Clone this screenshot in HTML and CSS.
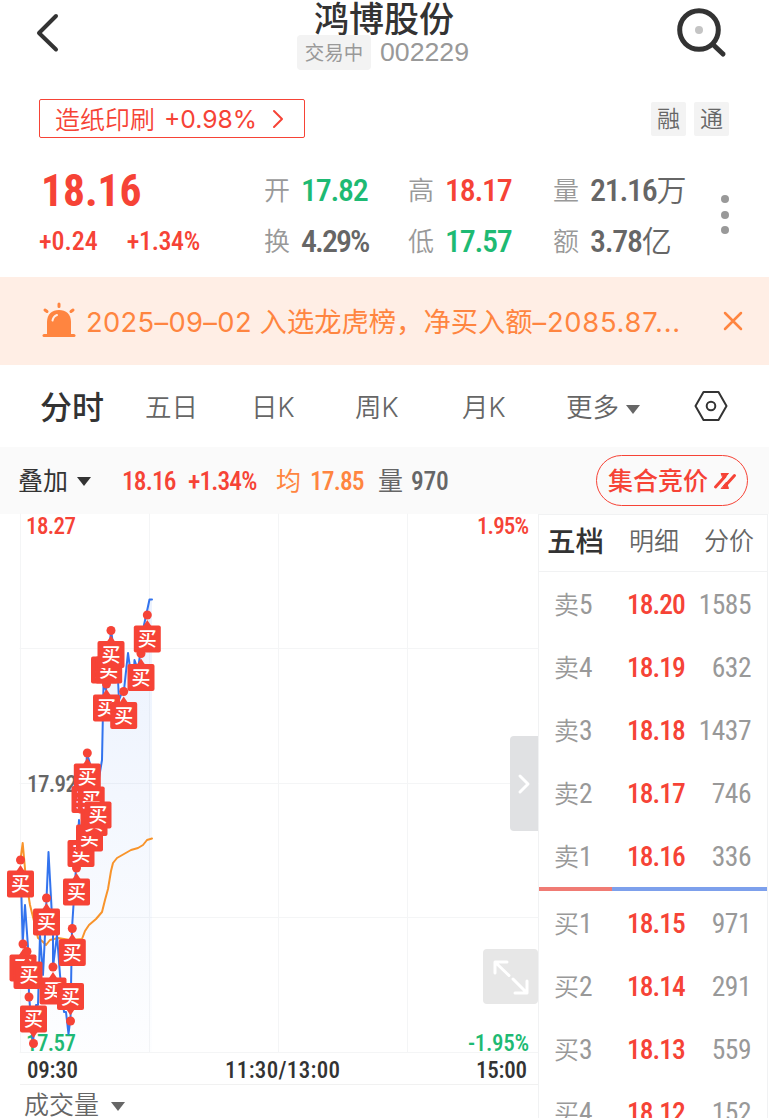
FILE: index.html
```html
<!DOCTYPE html>
<html lang="zh-CN">
<head>
    <meta charset="UTF-8">
    <meta name="viewport" content="width=device-width, initial-scale=1.0">
    <title>鸿博股份 002229</title>
    <link rel="stylesheet" href="styles.css">
</head>
<body>
    <header class="header">
        <svg class="back" width="24" height="40" viewBox="0 0 24 40"><path d="M20 3 L3 20 L20 36.500" /></svg>
        <div class="title">
            <h1>鸿博股份</h1>
            <div class="sub"><span class="status">交易中</span><span class="code">002229</span></div>
        </div>
        <svg class="search" width="52" height="52" viewBox="0 0 52 52">
            <circle cx="24" cy="24" r="19.300" /><path d="M38.500 39 L48 48" /><circle class="dot" cx="24" cy="24" r="4" />
        </svg>
    </header>

    <div class="sector-row">
        <a class="sector">造纸印刷 <span class="sector-pct">+0.98%</span>
            <svg width="12" height="20" viewBox="0 0 12 20"><path d="M2 2 L10 10 L2 18" /></svg>
        </a>
        <div class="tags"><span>融</span><span>通</span></div>
    </div>

    <section class="quote">
        <div class="price">
            <div class="num last">18.16</div>
            <div class="change"><span class="num">+0.24</span><span class="num">+1.34%</span></div>
        </div>
        <dl class="stats">
            <div><dt>开</dt><dd class="num green">17.82</dd></div>
            <div><dt>高</dt><dd class="num red">18.17</dd></div>
            <div><dt>量</dt><dd class="num">21.16<i>万</i></dd></div>
            <div><dt>换</dt><dd class="num turnover">4.29%</dd></div>
            <div><dt>低</dt><dd class="num green">17.57</dd></div>
            <div><dt>额</dt><dd class="num">3.78<i>亿</i></dd></div>
        </dl>
        <div class="dots"><b></b><b></b><b></b></div>
    </section>

    <div class="notice">
        <svg class="alarm" width="34" height="36" viewBox="0 0 34 36">
            <path class="lamp" d="M5 33 V20 C5 12 10 8 17 8 C24 8 29 12 29 20 V33 Z" />
            <path class="ray" d="M17 2 V4.500 M3 8 L5 9.500 M31 8 L29 9.500" />
            <path class="base" d="M2 33.500 H32" />
            <path class="shine" d="M10.500 18.500 C11 15.500 12.500 14 15 13" />
        </svg>
        <p><span class="date">2025–09–02</span> 入选龙虎榜，净买入额<span class="amount">–2085.87...</span></p>
        <svg class="close" width="20" height="20" viewBox="0 0 20 20"><path d="M2 2 L18 18 M18 2 L2 18" /></svg>
    </div>

    <nav class="tabs">
        <a class="active">分时</a>
        <a>五日</a>
        <a>日K</a>
        <a>周K</a>
        <a>月K</a>
        <a class="more">更多<i class="caret"></i></a>
        <svg width="34" height="32" viewBox="0 0 34 32">
            <path d="M9.500 2 H24.500 L32.500 16 L24.500 30 H9.500 L1.500 16 Z" /><circle cx="17" cy="16" r="4.300" />
        </svg>
    </nav>

    <div class="infobar">
        <span class="overlay">叠加<i class="caret"></i></span>
        <span class="num red now">18.16</span>
        <span class="num red pct">+1.34%</span>
        <span class="orange avg">均</span>
        <span class="num orange avg-num">17.85</span>
        <span class="vol">量</span>
        <span class="num vol-num">970</span>
        <a class="auction"><span>集合竞价</span>
            <svg width="22" height="18" viewBox="0 0 22 18">
                <path class="bar" d="M1.500 15 L11 4.500 M20.500 3.500 L11 14" />
                <path class="cap" d="M7.500 1.500 H14.500 L9.500 7 Z M7.500 16.500 H14.500 L12.500 10.500 Z" />
            </svg>
        </a>
    </div>

    <main class="main">
        <div class="left">
            <svg class="chart" width="538" height="570" viewBox="0 514 538 570">
                <defs>
                    <linearGradient id="area" x1="0" y1="0" x2="0" y2="1">
                        <stop offset="0" stop-color="#3b7cf0" stop-opacity=".1" />
                        <stop offset="1" stop-color="#3b7cf0" stop-opacity=".01" />
                    </linearGradient>
                    <g id="buy">
                        <rect x="-13.500" y="-13.500" width="27" height="27" rx="2" />
                        <text y="7.300">买</text>
                    </g>
                    <g id="up">
                        <circle cy="-24" r="4.500" /><path d="M-4 -13 L0 -19 L4 -13 Z" />
                        <use href="#buy" />
                    </g>
                    <g id="down">
                        <circle cy="24.500" r="4.500" /><path d="M-4 13 L0 19 L4 13 Z" />
                        <use href="#buy" />
                    </g>
                </defs>

                <path class="grid" d="M20.500 514 V1052 M149.500 514 V1052 M278.500 514 V1052 M407.500 514 V1052 M20 648.500 H538 M20 783.500 H538 M20 917.500 H538 M20 1052.500 H538" />

                <text class="label red" x="26" y="534" textLength="50">18.27</text>
                <text class="label red" x="477" y="534" textLength="52">1.95%</text>
                <text class="label gray" x="27" y="792" textLength="50">17.92</text>
                <text class="label green" x="26" y="1050.500" textLength="50">17.57</text>
                <text class="label green" x="468" y="1050.500" textLength="61">-1.95%</text>
                <text class="label time" x="27" y="1078" textLength="51">09:30</text>
                <text class="label time" x="225" y="1078" textLength="115">11:30/13:00</text>
                <text class="label time" x="476" y="1078" textLength="51">15:00</text>

                <path fill="url(#area)" d="M21 893 L25 905 L33 1010 L40 935 L48.500 852 L57 935 L68.500 1034 L72 928 L76 868 L79 820 L87 753 L97 790 L102 760 L103 690 L111 630 L119 700 L128 652 L133 690 L144 625 L149.500 599.500 H152 V1052 H21 Z" />
                <path class="avg-line" d="M20.700 858 L22.700 843 L26 880 L30 905 L35 925 L38 938 L42 941 L46 945 L50 940 L58 938 L70 940 L82 939 L85 931 L89 925 L96 919 L102 912 L105 900 L108 889 L111 871 L113 863 L117 858 L124 854 L131 850 L138 848 L143 845 L147 840 L152 838.500" />
                <path class="price-line" d="M20.700 870 L22.700 943 L25 905 L28 947 L29 995 L33 1043 L36 1005 L38 1005 L40 935 L43 975 L45 935 L48.500 852 L53 935 L53 967 L57 935 L60 975 L64 1012 L66 1012 L68.500 1034 L70.500 1018 L72 928 L73.500 905 L76 868 L79 820 L82 845 L87 753 L97 790 L102 760 L103.500 685 L106 690 L111 630 L118 680 L119 700 L121 695 L124 690 L128 653 L133 690 L134.500 660 L138 670 L144 625 L149.500 599.500 L152 599.500" />

                <g class="marks">
                    <use href="#up" x="20.500" y="884" />
                    <use href="#up" x="23" y="968" />
                    <use href="#up" x="27" y="975.500" />
                    <use href="#buy" x="29" y="975" />
                    <circle cx="29" cy="997" r="4.500" />
                    <use href="#down" x="33.500" y="1019" />
                    <use href="#up" x="46.500" y="922" />
                    <use href="#up" x="53" y="991" />
                    <use href="#down" x="70.500" y="996.500" />
                    <use href="#up" x="72.300" y="952.500" />
                    <use href="#up" x="76.500" y="892" />
                    <use href="#buy" x="81" y="853.500" />
                    <use href="#buy" x="89.500" y="838" />
                    <use href="#buy" x="94" y="822.500" />
                    <use href="#buy" x="85" y="799.500" />
                    <use href="#buy" x="91.200" y="800" />
                    <use href="#buy" x="98" y="815" />
                    <use href="#up" x="87.300" y="777" />
                    <use href="#up" x="106.500" y="708" />
                    <use href="#up" x="123.700" y="715.500" />
                    <use href="#buy" x="104.500" y="670" />
                    <use href="#buy" x="108.700" y="670" />
                    <use href="#up" x="111" y="654.500" />
                    <use href="#up" x="141" y="677.500" />
                    <use href="#up" x="147.300" y="639" />
                </g>
            </svg>
            <button class="collapse"><svg width="12" height="20" viewBox="0 0 12 20"><path d="M2 2 L10 10 L2 18" /></svg></button>
            <button class="expand"><svg width="36" height="36" viewBox="0 0 36 36"><path d="M2 14 V3 H14 M2.500 3.500 L16 16.500 M20 20 L33 33 M22 34 H34 V22" /></svg></button>
            <div class="volume">成交量<i class="caret"></i></div>
        </div>

        <aside class="book">
            <div class="book-tabs"><a class="active">五档</a><a>明细</a><a>分价</a></div>
            <div class="row"><span>卖<b class="num">5</b></span><span class="num red">18.20</span><span class="num">1585</span></div>
            <div class="row"><span>卖<b class="num">4</b></span><span class="num red">18.19</span><span class="num">632</span></div>
            <div class="row"><span>卖<b class="num">3</b></span><span class="num red">18.18</span><span class="num">1437</span></div>
            <div class="row"><span>卖<b class="num">2</b></span><span class="num red">18.17</span><span class="num">746</span></div>
            <div class="row"><span>卖<b class="num">1</b></span><span class="num red">18.16</span><span class="num">336</span></div>
            <div class="ratio"><div style="width: 32%"></div></div>
            <div class="row"><span>买<b class="num">1</b></span><span class="num red">18.15</span><span class="num">971</span></div>
            <div class="row"><span>买<b class="num">2</b></span><span class="num red">18.14</span><span class="num">291</span></div>
            <div class="row"><span>买<b class="num">3</b></span><span class="num red">18.13</span><span class="num">559</span></div>
            <div class="row"><span>买<b class="num">4</b></span><span class="num red">18.12</span><span class="num">152</span></div>
        </aside>
    </main>
</body>
</html>
```
FILE: styles.css
```css
* {
    box-sizing: border-box;
}
body {
    margin: 0;
    width: 769px;
    height: 1118px;
    overflow: hidden;
    background: #fff;
    color: #333;
    font-family: Inter, "Noto Sans CJK SC", sans-serif;
}
svg {
    display: block;
    flex: none;
    overflow: visible;
    fill: none;
    stroke-linecap: round;
    stroke-linejoin: round;
}
h1, p, dl, dd {
    margin: 0;
}
i {
    font-style: normal;
}
.num {
    font-family: Roboto, "Noto Sans CJK SC", sans-serif;
    font-stretch: 75%;
    font-weight: 500;
    white-space: nowrap;
}
.red {
    color: #f64336;
}
.green {
    color: #1eba73;
}
.orange {
    color: #ff8540;
}
.caret {
    display: inline-block;
    border: 7px solid transparent;
    border-top: 9px solid currentColor;
    border-bottom: 0;
}

/* header */
.header {
    display: flex;
    height: 99px;
    padding: 0 42px 0 36px;
}
.back {
    margin-top: 13px;
    stroke: #333;
    stroke-width: 4;
}
.search {
    margin: 6px 0 0 auto;
    stroke: #333;
    stroke-width: 5;
}
.search .dot {
    fill: #c4c4c4;
    stroke: none;
}
.title {
    width: 174px;
    margin-left: 237px;
}
.title h1 {
    height: 35px;
    text-align: center;
    font-size: 35px;
    font-weight: 500;
    line-height: 38px;
}
.sub {
    display: flex;
    align-items: center;
    gap: 9px;
    color: #999;
}
.status {
    flex: none;
    width: 74px;
    height: 35px;
    border-radius: 4px;
    background: #f3f3f3;
    font-size: 19.500px;
    line-height: 36px;
    text-align: center;
}
.code {
    font-family: "Liberation Sans", sans-serif;
    font-size: 26.700px;
}

/* sector */
.sector-row {
    display: flex;
    justify-content: space-between;
    height: 64px;
    padding: 0 40px 0 39px;
}
.sector {
    display: flex;
    align-items: center;
    width: 266px;
    height: 39px;
    padding: 0 0 1px 15px;
    border: 1.500px solid #f64336;
    border-radius: 2px;
    color: #f64336;
    font-size: 25px;
    font-weight: 350;
    white-space: nowrap;
}
.sector-pct {
    margin: 2px 15px 0 9px;
    font-size: 24.700px;
    font-weight: 400;
}
.sector svg {
    margin-top: 1px;
    stroke: #f64336;
    stroke-width: 2;
}
.tags {
    display: flex;
    gap: 8px;
    margin-top: 3px;
}
.tags span {
    width: 35px;
    height: 34px;
    border-radius: 2px;
    background: #f3f3f3;
    color: #666;
    font-size: 23px;
    font-weight: 350;
    line-height: 34px;
    text-align: center;
}

/* quote */
.quote {
    display: flex;
    height: 114px;
}
.price {
    width: 264px;
    padding-left: 39px;
    color: #f64336;
}
.last {
    height: 56px;
    padding-left: 2px;
    font-size: 43.500px;
    font-weight: 700;
    line-height: 58px;
}
.change {
    display: flex;
    gap: 29px;
    font-size: 26px;
    line-height: 44px;
}
.change .num:last-child {
    letter-spacing: -.400px;
}
.stats {
    display: grid;
    grid-template-columns: 144px 145px 150px;
    grid-template-rows: 51px 51px;
    color: #666;
}
.stats div {
    display: flex;
    align-items: center;
    gap: 11px;
    height: 54px;
}
.stats dt {
    padding-bottom: 3px;
    color: #999;
    font-size: 26px;
    font-weight: 350;
}
.stats dd {
    font-size: 32px;
    letter-spacing: -1.300px;
    line-height: 40px;
}
.stats .turnover {
    letter-spacing: -2px;
}
.stats i {
    font-size: 30px;
    font-weight: 350;
}
.dots {
    display: flex;
    flex-direction: column;
    gap: 7.500px;
    margin: 32px 0 0 18px;
}
.dots b {
    width: 8px;
    height: 8px;
    border-radius: 50%;
    background: #999;
}

/* notice */
.notice {
    display: flex;
    align-items: center;
    height: 88px;
    padding: 0 26px 0 42px;
    background: #ffeee5;
    color: #ff8540;
}
.alarm {
    margin-bottom: 2px;
    stroke: #ff8540;
    stroke-width: 3;
}
.alarm .lamp {
    fill: #ff8540;
    stroke: none;
}
.alarm .shine {
    stroke: #ffeee5;
    stroke-width: 2;
}
.notice p {
    flex: 1;
    margin-left: 10px;
    padding-bottom: 2px;
    font-size: 27.300px;
    white-space: nowrap;
}
.notice .date {
    letter-spacing: .350px;
}
.notice .amount {
    letter-spacing: .750px;
}
.close {
    stroke: #ff8540;
    stroke-width: 2.500;
}

/* period tabs */
.tabs {
    display: grid;
    grid-template-columns: 105px 106px 104px 107px 104px 128px 34px;
    align-items: center;
    height: 82px;
    padding: 0 0 0 40px;
    color: #666;
    font-size: 26.500px;
    font-weight: 350;
    white-space: nowrap;
}
.tabs a {
    padding-bottom: 2px;
}
.tabs .active {
    color: #333;
    font-size: 32px;
    font-weight: 500;
}
.tabs .caret {
    margin: 0 0 3px 7px;
}
.tabs svg {
    stroke: #333;
    stroke-width: 2;
}

/* info bar */
.infobar {
    display: flex;
    align-items: center;
    height: 67px;
    padding: 0 21px 0 18px;
    background: #fafafa;
    font-size: 25px;
    white-space: nowrap;
}
.infobar .num {
    font-size: 25.500px;
    letter-spacing: -.900px;
}
.overlay, .avg, .vol, .auction span {
    padding-bottom: 3px;
}
.overlay {
    width: 104px;
}
.overlay .caret {
    margin: 0 0 4px 9px;
}
.now {
    width: 66px;
}
.pct {
    width: 88px;
}
.avg {
    width: 34px;
}
.avg-num {
    width: 68px;
}
.vol {
    width: 33px;
    color: #666;
}
.infobar .vol-num {
    color: #666;
    letter-spacing: -.300px;
}
.auction {
    display: flex;
    align-items: center;
    gap: 6px;
    width: 152px;
    height: 51px;
    margin-left: auto;
    padding-left: 11px;
    border: 1px solid #f64336;
    border-radius: 26px;
    color: #f64336;
    font-weight: 500;
}
.auction .bar {
    stroke: #f64336;
    stroke-width: 3;
}
.auction .cap {
    fill: #f64336;
    stroke: #f64336;
    stroke-width: 1;
}

/* chart */
.main {
    display: flex;
    height: 604px;
}
.left {
    position: relative;
    width: 538px;
}
.grid {
    stroke: #f4f5f6;
    stroke-width: 1;
}
.label {
    font-family: Roboto, sans-serif;
    font-size: 23px;
    font-stretch: 75%;
    font-weight: 500;
    fill: currentColor;
}
.gray {
    color: #666;
}
.time {
    color: #333;
}
.price-line {
    stroke: #3273ee;
    stroke-width: 2;
}
.avg-line {
    stroke: #f8942b;
    stroke-width: 2;
}
.marks {
    fill: #f64336;
}
#buy text {
    fill: #fff;
    font-size: 19px;
    font-weight: 500;
    text-anchor: middle;
}
.collapse, .expand {
    position: absolute;
    right: 0;
    display: flex;
    align-items: center;
    justify-content: center;
    padding: 0;
    border: 0;
}
.collapse {
    top: 222px;
    width: 28px;
    height: 95px;
    border-radius: 4px 0 0 4px;
    background: #e0e1e3;
}
.expand {
    top: 435px;
    width: 55px;
    height: 55px;
    border-radius: 4px;
    background: #e7e7e7;
}
.collapse svg, .expand svg {
    stroke: #fff;
    stroke-width: 3;
}
.volume {
    margin-left: 20px;
    padding-left: 4px;
    border-top: 1px solid #f1f1f1;
    color: #666;
    font-size: 25px;
    font-weight: 350;
    line-height: 40px;
}
.volume .caret {
    margin: 0 0 3px 12px;
}

/* order book */
.book {
    width: 230px;
    border: 1px solid #f1f2f3;
    border-bottom: 0;
    color: #999;
}
.book-tabs {
    display: flex;
    align-items: center;
    justify-content: space-between;
    height: 57px;
    padding: 0 13px 8px 8px;
    border-bottom: 1px solid #f1f2f3;
    color: #666;
    font-size: 25px;
    font-weight: 350;
}
.book-tabs .active {
    color: #333;
    font-size: 28.500px;
    font-weight: 500;
}
.row {
    display: grid;
    grid-template-columns: 73px 62px 1fr;
    align-items: center;
    height: 63px;
    padding: 2px 16px 0 15px;
    font-size: 25px;
    font-weight: 350;
    white-space: nowrap;
}
.row .num {
    font-size: 27.500px;
    letter-spacing: -1px;
}
.row b.num {
    font-weight: 400;
}
.row > :first-child {
    padding-bottom: 4px;
}
.row > .num:last-child {
    font-weight: 450;
    letter-spacing: -.500px;
    text-align: right;
}
.ratio {
    height: 4px;
    background: #7da0ec;
}
.ratio div {
    height: 4px;
    background: #f07b74;
}
```
